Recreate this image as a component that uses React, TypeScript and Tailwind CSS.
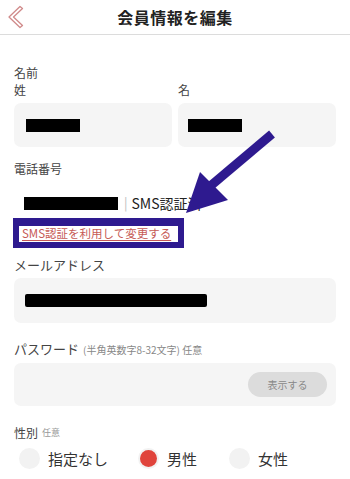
import React from "react";

const font = { fontFamily: '"Noto Sans CJK JP", "Noto Sans", sans-serif' };

function Redacted({ w }: { w: number }) {
  return <div className="h-[13px] bg-black" style={{ width: w }} />;
}

function Radio({ label, checked }: { label: string; checked?: boolean }) {
  return (
    <div className="flex items-center gap-[8px]">
      <div className="w-[21px] h-[21px] rounded-full bg-[#f2f2f2] flex items-center justify-center">
        {checked && <div className="w-[17px] h-[17px] rounded-full bg-[#e0443c]" />}
      </div>
      <span className="text-[15px] text-[#333] leading-none">{label}</span>
    </div>
  );
}

export default function App() {
  return (
    <div className="relative w-[350px] h-[479px] bg-white overflow-hidden" style={font}>
      {/* header */}
      <div className="relative h-[35px] border-b border-[#dcdcdc] flex items-center justify-center">
        <svg className="absolute left-[7px] top-[5px]" width="18" height="24" viewBox="0 0 18 24">
          <path
            d="M13 1.5 L2 12 L13 22.5 L15.5 20.5 L6.5 12 L15.5 3.5 Z"
            fill="none"
            stroke="#d08a8a"
            strokeWidth="1.3"
            strokeLinejoin="round"
          />
        </svg>
        <span className="text-[16px] font-bold text-[#222] tracking-[0.5px]">会員情報を編集</span>
      </div>

      <div className="px-[14px]">
        <div className="mt-[29px] h-[17px] flex items-center text-[12px] text-[#444]">名前</div>
        <div className="h-[18px] flex items-center text-[12px] text-[#444]">
          <span className="w-[164px]">姓</span>
          <span>名</span>
        </div>
        <div className="mt-[4px] flex gap-[6px]">
          <div className="w-[158px] h-[44px] rounded-[7px] bg-[#f5f5f5] flex items-center pl-[12px]">
            <Redacted w={54} />
          </div>
          <div className="flex-1 h-[44px] rounded-[7px] bg-[#f5f5f5] flex items-center pl-[10px]">
            <Redacted w={54} />
          </div>
        </div>

        <div className="mt-[13px] h-[18px] flex items-center text-[12px] text-[#444]">電話番号</div>
        <div className="mt-[16px] h-[18px] flex items-center pl-[10px]">
          <Redacted w={94} />
          <span className="ml-[6px] text-[#bbb] text-[13px]">|</span>
          <span className="ml-[4px] text-[14px] text-[#222]">SMS認証済</span>
        </div>
        <div className="mt-[6px] -ml-[1px] w-[171px] h-[30px] border-[6px] border-t-[8px] border-[#2e1a8f] bg-white flex items-center pl-[3px]">
          <span className="text-[11.5px] text-[#c65a55] underline underline-offset-2 leading-none whitespace-nowrap">
            SMS認証を利用して変更する
          </span>
        </div>

        <div className="mt-[8px] h-[18px] flex items-center text-[13px] text-[#444]">メールアドレス</div>
        <div className="mt-[4px] h-[45px] rounded-[7px] bg-[#f5f5f5] flex items-center pl-[11px]">
          <div className="w-[182px] h-[13px] bg-black rounded-[2px]" />
        </div>

        <div className="mt-[17px] h-[18px] flex items-center gap-[4px]">
          <span className="text-[13px] text-[#444]">パスワード</span>
          <span className="text-[10px] text-[#888]">(半角英数字8-32文字) 任意</span>
        </div>
        <div className="mt-[5px] h-[43px] rounded-[7px] bg-[#f5f5f5] flex items-center justify-end pr-[9px]">
          <div className="w-[79px] h-[25px] rounded-full bg-[#dcdcdc] flex items-center justify-center text-[10px] text-[#888]">
            表示する
          </div>
        </div>

        <div className="mt-[18px] h-[18px] flex items-center gap-[4px]">
          <span className="text-[12px] text-[#444]">性別</span>
          <span className="text-[9px] text-[#999]">任意</span>
        </div>
        <div className="mt-[6px] h-[21px] flex items-center pl-[5px]">
          <div className="w-[119px]">
            <Radio label="指定なし" />
          </div>
          <div className="w-[91px]">
            <Radio label="男性" checked />
          </div>
          <Radio label="女性" />
        </div>
      </div>

      {/* annotation arrow */}
      <svg className="absolute left-0 top-0 pointer-events-none" width="350" height="479">
        <line x1="272" y1="134" x2="208" y2="188" stroke="#2e1a8f" strokeWidth="9" />
        <polygon points="200,172 228,200 186,213" fill="#2e1a8f" />
      </svg>
    </div>
  );
}
